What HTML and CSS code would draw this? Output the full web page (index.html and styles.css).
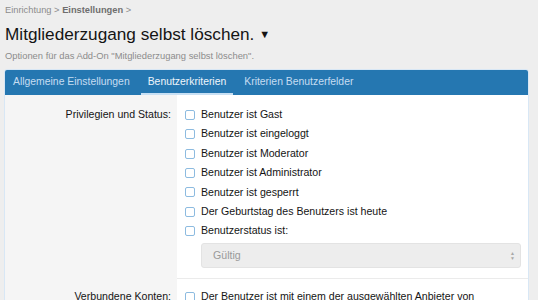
FILE: index.html
```html
<!DOCTYPE html>
<html lang="de">
<head>
  <meta charset="UTF-8" />
  <title>Mitgliederzugang selbst löschen</title>
  <link rel="stylesheet" href="styles.css">
</head>
<body>
  <div class="header">
    <div class="crumbs">Einrichtung <span class="sep">&gt;</span> <b>Einstellungen</b> <span class="sep">&gt;</span></div>
    <h1>Mitgliederzugang selbst löschen. <span class="caret">&#9660;</span></h1>
    <div class="desc">Optionen für das Add-On "Mitgliederzugang selbst löschen".</div>
  </div>

  <div class="block">
    <div class="tabs">
      <span class="tab">Allgemeine Einstellungen</span>
      <span class="tab active">Benutzerkriterien</span>
      <span class="tab">Kriterien Benutzerfelder</span>
    </div>

    <div class="row">
      <div class="label">Privilegien und Status:</div>
      <div class="controls">
        <label class="check"><span class="box"></span>Benutzer ist Gast</label>
        <label class="check"><span class="box"></span>Benutzer ist eingeloggt</label>
        <label class="check"><span class="box"></span>Benutzer ist Moderator</label>
        <label class="check"><span class="box"></span>Benutzer ist Administrator</label>
        <label class="check"><span class="box"></span>Benutzer ist gesperrt</label>
        <label class="check"><span class="box"></span>Der Geburtstag des Benutzers ist heute</label>
        <label class="check"><span class="box"></span>Benutzerstatus ist:</label>
        <div class="select">Gültig <span class="arrows">&#9650;<br>&#9660;</span></div>
      </div>
    </div>

    <div class="row">
      <div class="label">Verbundene Konten:</div>
      <div class="controls split">
        <label class="check"><span class="box"></span>Der Benutzer ist mit einem der ausgewählten Anbieter von</label>
      </div>
    </div>
  </div>
</body>
</html>
```

FILE: styles.css
```css
body {
  margin: 0;
  background-color: #eeeeee;
  font-family: 'Liberation Sans', Arial, sans-serif;
  color: #141414;
  overflow: hidden;
}
.header {
  padding: 3px 5px 0 5px;
}
.crumbs {
  font-size: 9.3px;
  color: #8c8c8c;
  line-height: 14px;
}
.crumbs b {
  color: #6e6e6e;
}
.desc {
  font-size: 9.4px;
  color: #8c8c8c;
  margin-top: 3px;
  line-height: 14px;
}
h1 {
  font-size: 17.2px;
  font-weight: normal;
  margin: 5px 0 0 0;
  line-height: 24px;
}
.caret {
  font-size: 11px;
  vertical-align: 2px;
}
.block {
  margin: 6px 0 0 4px;
  width: 523px;
  border: 1px solid #d8e7f5;
  border-radius: 3px;
  background-color: #fff;
}
.tabs {
  background-color: #2577b1;
  height: 25px;
  display: flex;
  gap: 4px;
  padding-left: 1px;
  border-radius: 2px 2px 0 0;
}
.tab {
  color: #c6ddf1;
  font-size: 10.4px;
  line-height: 23px;
  padding: 0 7px;
  border-bottom: 2px solid transparent;
}
.tab.active {
  color: #eef5fb;
  border-bottom-color: #c8e0f4;
}
.row {
  display: flex;
}
.label {
  width: 166px;
  flex: none;
  background-color: #f5f5f5;
  text-align: right;
  padding: 10px 6px 0 0;
  font-size: 10.6px;
  line-height: 19.5px;
}
.controls {
  flex: 1;
  padding: 10px 7px 10px 8px;
  border-bottom: 1px solid #ebebeb;
}
.controls.split {
  border-bottom: none;
  padding-top: 8px;
}
.row + .row .label {
  padding-top: 8px;
}
.check {
  display: flex;
  align-items: center;
  font-size: 10.6px;
  line-height: 19.4px;
}
.box {
  width: 8px;
  height: 8px;
  border: 1px solid #8dbbe0;
  border-radius: 2px;
  margin-right: 6px;
  flex: none;
}
.select {
  margin: 2px 0 0 16px;
  height: 23px;
  background-color: #ededed;
  border: 1px solid #e3e3e3;
  border-radius: 3px;
  color: #9a9a9a;
  font-size: 10.6px;
  line-height: 23px;
  padding-left: 11px;
  position: relative;
}
.arrows {
  position: absolute;
  right: 5px;
  top: 7px;
  font-size: 5px;
  line-height: 5px;
  color: #a8a8a8;
}
```
